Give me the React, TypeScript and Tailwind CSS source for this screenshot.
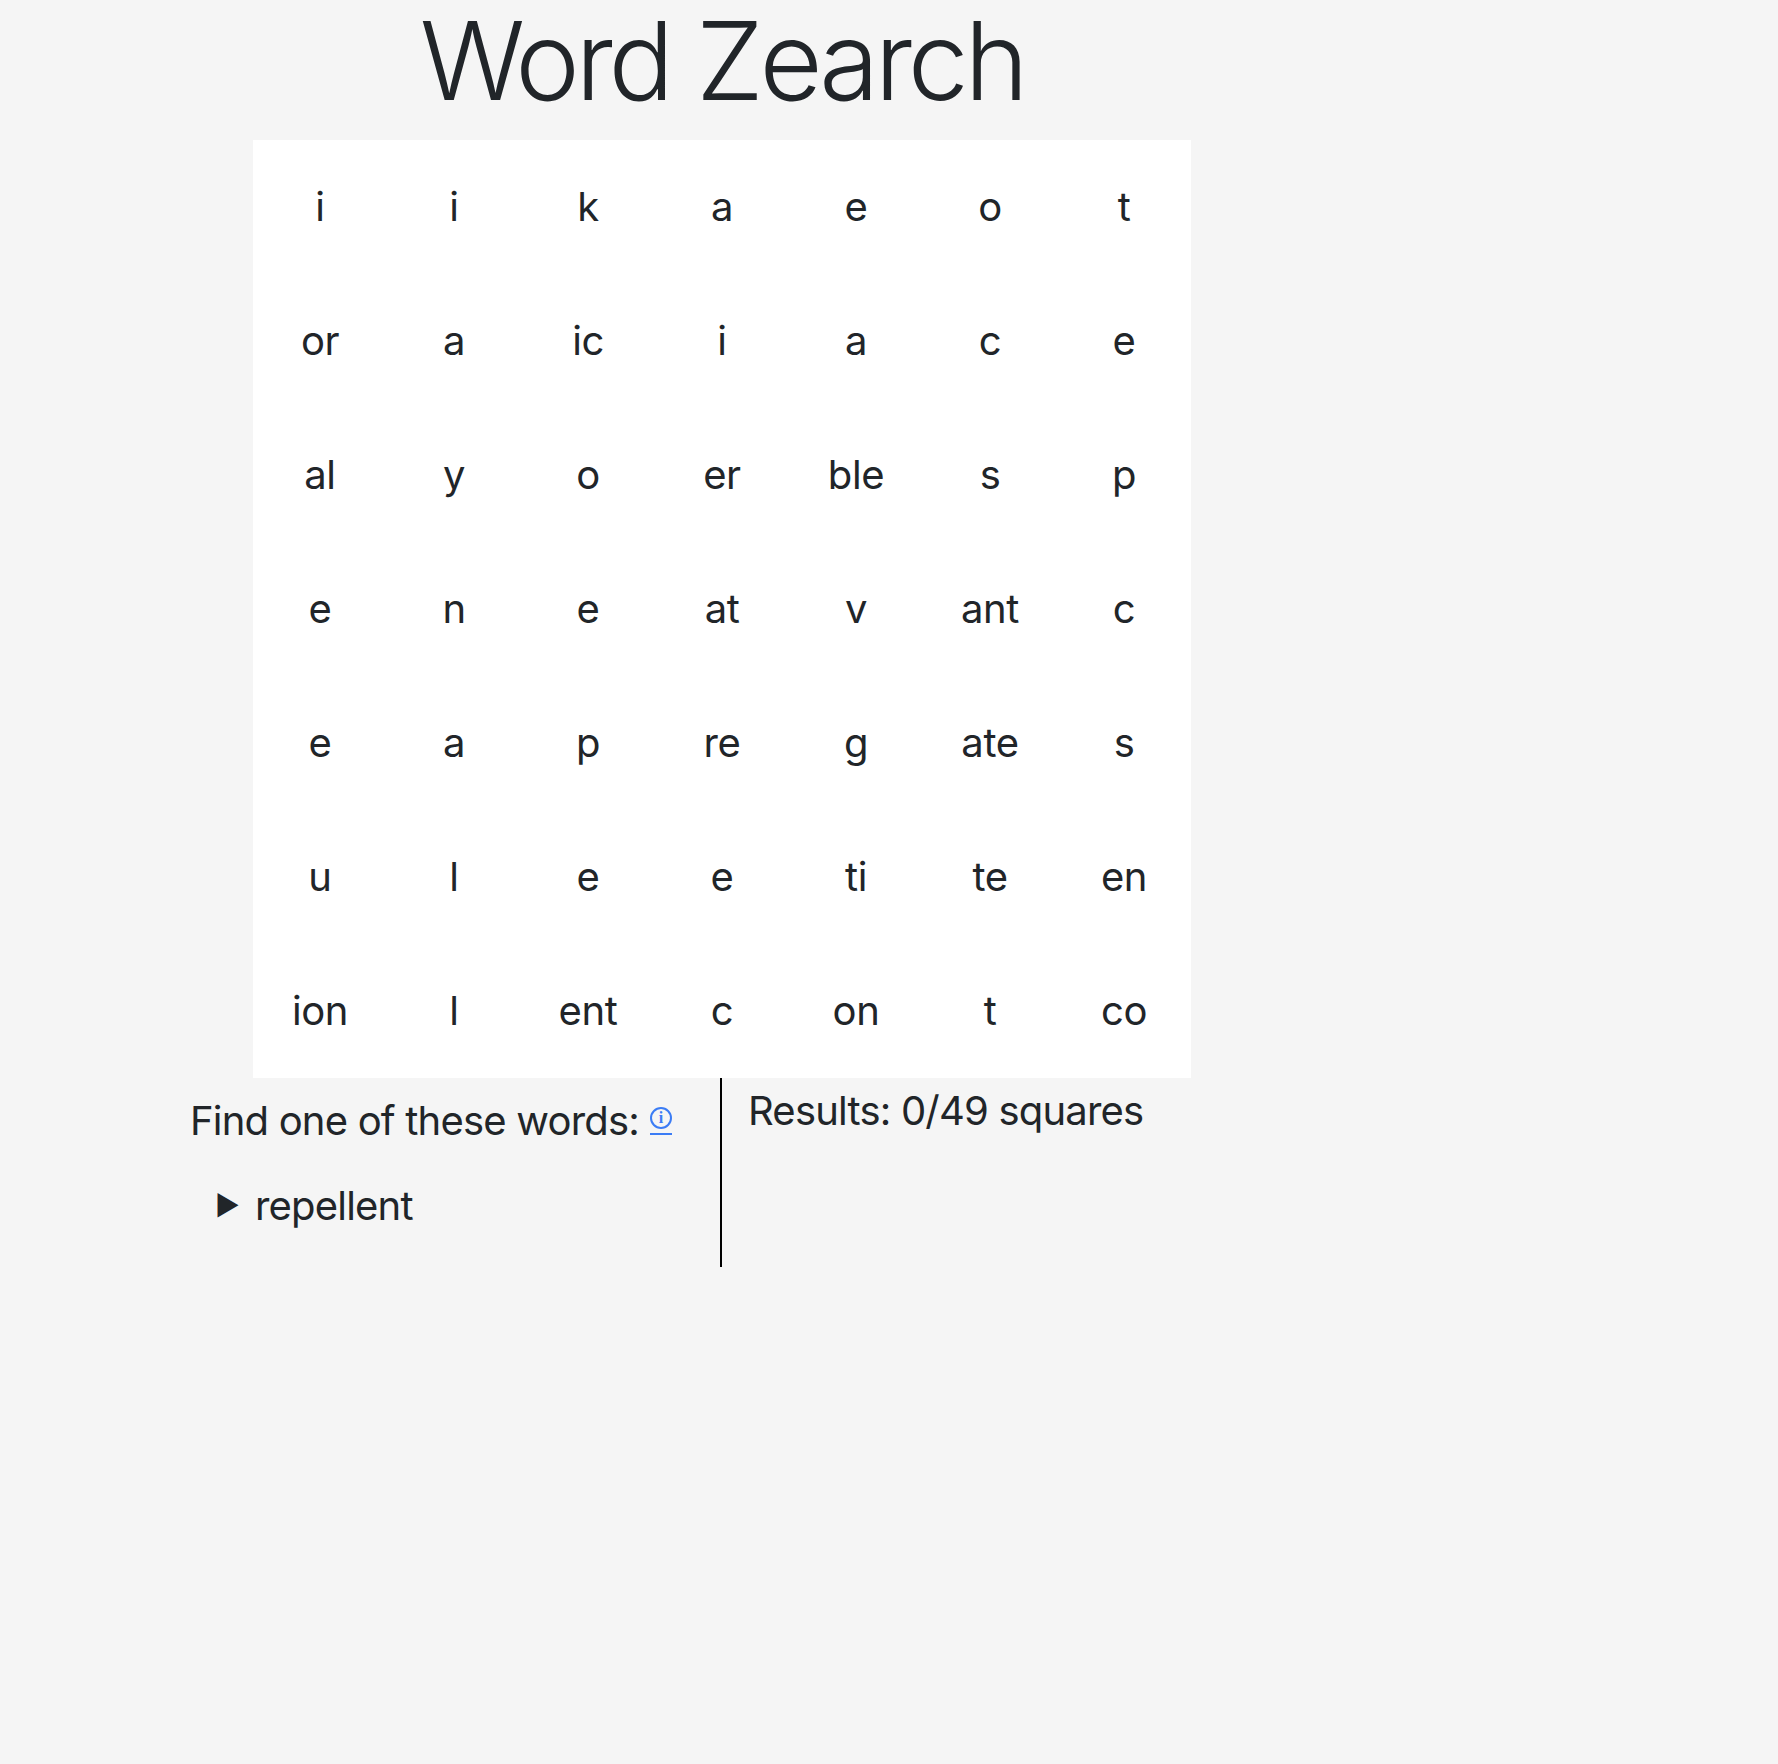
const grid: string[][] = [
    ["i", "i", "k", "a", "e", "o", "t"],
    ["or", "a", "ic", "i", "a", "c", "e"],
    ["al", "y", "o", "er", "ble", "s", "p"],
    ["e", "n", "e", "at", "v", "ant", "c"],
    ["e", "a", "p", "re", "g", "ate", "s"],
    ["u", "l", "e", "e", "ti", "te", "en"],
    ["ion", "l", "ent", "c", "on", "t", "co"],
];

const words = ["repellent"];

export default function App() {
    return (
        <main className="min-h-screen bg-[#f5f5f5] font-['Inter','Liberation_Sans',sans-serif] text-[#212529]">
            <div className="flex w-[1444px] flex-col items-center">
                <h1 className="mb-[20px] text-[109px] leading-[120px] font-light tracking-[-0.04em]">
                    Word Zearch
                </h1>
                <div className="grid w-[938px] grid-cols-7 bg-white">
                    {grid.flat().map((letter, idx) => (
                        <div
                            key={idx}
                            className="flex h-[134px] items-center justify-center text-[40px] tracking-[-0.01em]"
                        >
                            {letter}
                        </div>
                    ))}
                </div>
                <div className="flex w-full">
                    <div className="flex h-[189px] w-[722px] flex-col border-r-2 border-black pl-[190px]">
                        <p className="mt-[13px] flex items-center text-[40px] leading-[60px] tracking-[-0.02em]">
                            Find one of these words:
                            <a
                                href="#"
                                className="ml-[11px] inline-flex border-b-2 border-[#3b7cf5] pb-[4px] no-underline"
                            >
                                <span className="flex h-[22px] w-[22px] items-center justify-center rounded-full border-2 border-[#3b7cf5] font-['Liberation_Serif',serif] text-[16px] leading-none font-bold tracking-normal text-[#3b7cf5]">
                                    i
                                </span>
                            </a>
                        </p>
                        <ul className="mt-[25px] pl-[25px]">
                            {words.map((w) => (
                                <li
                                    key={w}
                                    className="flex items-center text-[40px] leading-[60px] tracking-[-0.02em]"
                                >
                                    <span className="mr-[16px] text-[27px]">▶</span>
                                    {w}
                                </li>
                            ))}
                        </ul>
                    </div>
                    <div className="pl-[26px]">
                        <p className="mt-[3px] text-[40px] leading-[60px] tracking-[-0.02em]">
                            Results: 0/49 squares
                        </p>
                    </div>
                </div>
            </div>
        </main>
    );
}
